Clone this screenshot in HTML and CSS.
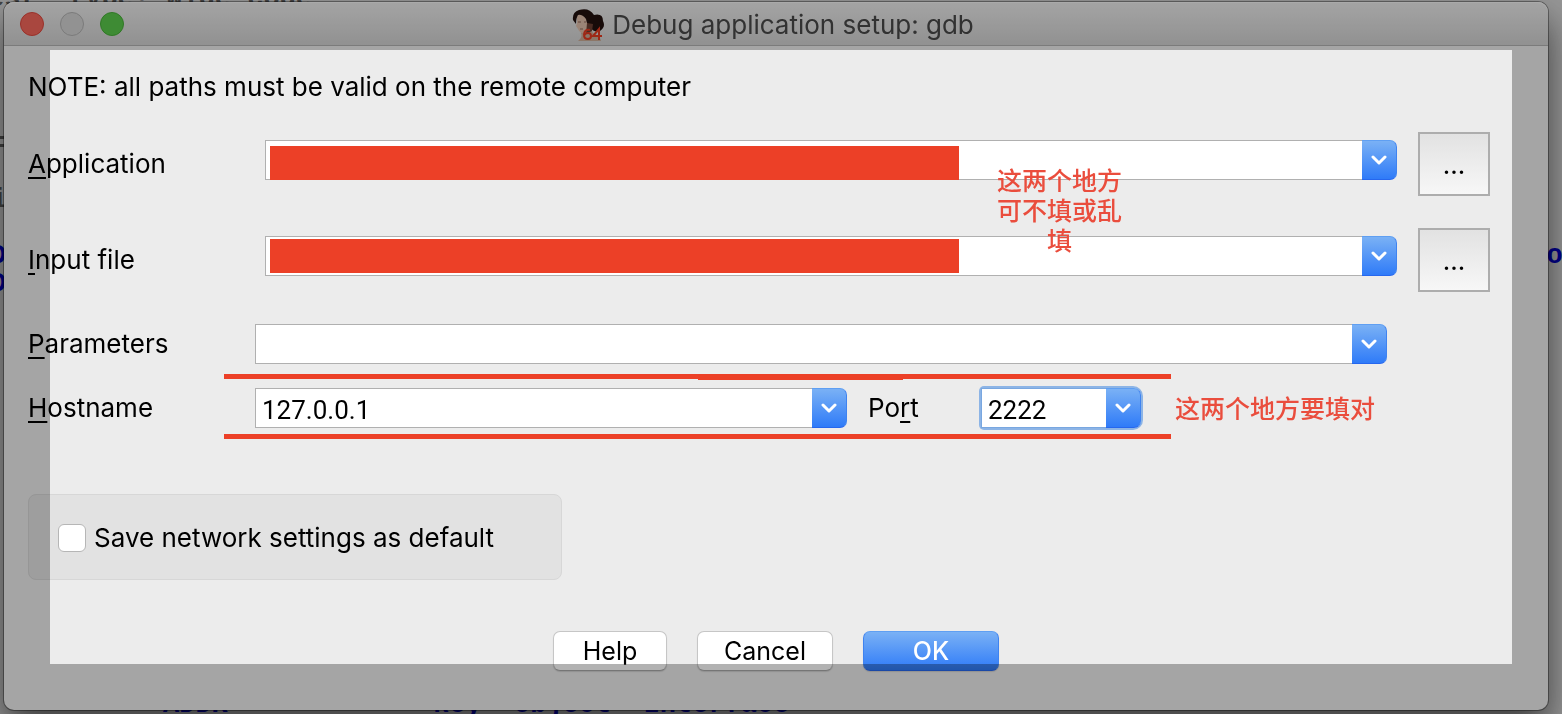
FILE: index.html
```
<!DOCTYPE html>
<html lang="en">
<head>
<meta charset="utf-8">
<title>Debug application setup: gdb</title>
<link rel="stylesheet" href="styles.css">
</head>
<body>
<div class="editor" aria-hidden="true">
  <span class="code code-top">est&nbsp; type! wide code</span>
  <span class="code code-left-a">=</span>
  <span class="code code-left-b">i</span>
  <span class="code code-left-c">D</span>
  <span class="code code-left-d">D</span>
  <span class="code code-right">or</span>
  <span class="code code-addr">ADDR</span>
  <span class="code code-key">key "object&nbsp; Interface</span>
</div>

<main class="window">
  <header class="titlebar">
    <div class="lights">
      <button class="light light-close" aria-label="Close"></button>
      <button class="light light-min" aria-label="Minimize"></button>
      <button class="light light-zoom" aria-label="Zoom"></button>
    </div>
    <h1 class="title">
      <svg class="portrait" viewBox="0 0 32 32" aria-hidden="true">
        <path d="M9 24 Q11 28 6 32 H29 Q28 27 21 24 L18 18 H10Z" fill="#c9a994"/>
        <path d="M5 7 Q8 3 13 4 L18 9 L18 20 L13 24 Q8 25 6 20 L4 17 L5 14Z" fill="#dfbeaa"/>
        <path d="M1 11 Q0 3 7 1 Q17-2 22 6 Q31 4 31 12 Q34 18 28 22 Q22 24 18 18 Q15 16 14 10 Q10 5 6 6 Q4 9 4 15Z" fill="#21100e"/>
        <path d="M15 14 L21 15 L20 22 L14 25Z" fill="#6b4033"/>
        <path d="M6 13 h3 M12 13 h2 M8 20 h3" stroke="#8f6658" stroke-width="1" fill="none"/>
        <path d="M18 21 Q12 20 12 26 Q12 30 16 30 Q19 30 19 27 Q19 24 16 24 Q13 24 12 27 M27 31 V20 L21 27 H30" stroke="#e23a20" stroke-width="2" fill="none"/>
      </svg>
      <span>Debug application setup: gdb</span>
    </h1>
  </header>

  <form class="form">
    <p class="note">NOTE: all paths must be valid on the remote computer</p>

    <div class="row row-path">
      <label class="label label-wide" for="app"><u>A</u>pplication</label>
      <div class="combo">
        <input class="field" id="app" type="text">
        <button class="drop" type="button" aria-label="Application history"><svg class="chevron" viewBox="0 0 16 10"><path d="M2 2 L8 8 L14 2"/></svg></button>
        <span class="redact redact-low"></span>
        <span class="remark remark-paths" lang="zh">这两个地方可不填或乱填</span>
      </div>
      <button class="browse" type="button" aria-label="Browse application">...</button>
    </div>

    <div class="row row-path">
      <label class="label label-wide" for="infile"><u>I</u>nput file</label>
      <div class="combo">
        <input class="field" id="infile" type="text">
        <button class="drop" type="button" aria-label="Input file history"><svg class="chevron" viewBox="0 0 16 10"><path d="M2 2 L8 8 L14 2"/></svg></button>
        <span class="redact"></span>
      </div>
      <button class="browse" type="button" aria-label="Browse input file">...</button>
    </div>

    <div class="row row-params">
      <label class="label" for="params"><u>P</u>arameters</label>
      <div class="combo">
        <input class="field" id="params" type="text">
        <button class="drop" type="button" aria-label="Parameters history"><svg class="chevron" viewBox="0 0 16 10"><path d="M2 2 L8 8 L14 2"/></svg></button>
      </div>
    </div>

    <div class="row row-host">
      <label class="label" for="host"><u>H</u>ostname</label>
      <div class="combo">
        <input class="field" id="host" type="text" value="127.0.0.1">
        <button class="drop" type="button" aria-label="Hostname history"><svg class="chevron" viewBox="0 0 16 10"><path d="M2 2 L8 8 L14 2"/></svg></button>
      </div>
      <label class="label label-port" for="port">Po<u>r</u>t</label>
      <div class="combo combo-port">
        <input class="field" id="port" type="text" value="2222">
        <button class="drop" type="button" aria-label="Port history"><svg class="chevron" viewBox="0 0 16 10"><path d="M2 2 L8 8 L14 2"/></svg></button>
      </div>
      <span class="marks"></span>
      <span class="remark remark-host" lang="zh">这两个地方要填对</span>
    </div>

    <div class="group">
      <input class="check" id="save" type="checkbox">
      <label for="save">Save network settings as default</label>
    </div>

    <div class="actions">
      <button class="btn btn-help" type="button">Help</button>
      <button class="btn" type="button">Cancel</button>
      <button class="btn btn-ok" type="submit">OK</button>
    </div>
  </form>
</main>
<div class="dim"></div>
</body>
</html>
```
FILE: styles.css
```
* { box-sizing: border-box; }

body {
  margin: 0;
  min-height: 100vh;
  display: flex;
  padding: 2px 14px 4px 4px;
  background: #ddd;
  color: #000;
  font-family: Inter, "Noto Sans CJK SC", sans-serif;
  font-size: 26px;
  line-height: 32px;
}

button, input { font: inherit; color: inherit; margin: 0; padding: 0; }

/* Code editor behind the dialog */
.editor { position: fixed; inset: 0; overflow: hidden; background: #d8d8d8; }
.code {
  position: absolute;
  font: bold 27px/28px "Liberation Mono", monospace;
  color: #0000c8;
  white-space: pre;
}
.code-top { left: -12px; top: -15px; color: #606060; }
.code-left-a { left: -9px; top: 130px; color: #606060; }
.code-left-b { left: -9px; top: 186px; color: #606060; }
.code-left-c { left: -10px; top: 242px; }
.code-left-d { left: -10px; top: 270px; }
.code-right { right: -17px; top: 242px; }
.code-addr { left: 163px; bottom: -5px; }
.code-key { left: 433px; bottom: -5px; }

.window {
  position: relative;
  flex: 1;
  display: flex;
  flex-direction: column;
  background: #ececec;
  border-radius: 10px;
  box-shadow: 0 0 0 1px rgba(0, 0, 0, .35), 0 18px 36px rgba(0, 0, 0, .6);
}

.titlebar {
  position: relative;
  display: flex;
  align-items: center;
  justify-content: center;
  height: 44px;
  padding: 2px 6px 0 0;
  border-bottom: 1px solid #b0b0b0;
  border-radius: 10px 10px 0 0;
  background: linear-gradient(#ebebeb, #d0d0d0);
  box-shadow: inset 0 1px #f4f4f4;
}
.lights { position: absolute; left: 16px; top: 10px; display: flex; gap: 16px; }
.light { width: 24px; height: 24px; border: 1px solid #dc463c; border-radius: 50%; background: #f3665b; }
.light-min { background: #d2d2d2; border-color: #b0b0b0; }
.light-zoom { background: #5ac84b; border-color: #46ad37; }
.title { display: flex; align-items: center; gap: 8px; margin: 0; font-size: 26px; font-weight: 400; color: #484848; }
.portrait { width: 32px; height: 32px; }

.form { flex: 1; padding: 25px 0 39px 24px; }
.note { margin: 0 0 29px; }

.row { position: relative; display: flex; align-items: center; }
.row-path { align-items: flex-start; padding-right: 58px; margin-bottom: 32px; }
.row-path .label { padding-top: 16px; }
.row-path .combo { margin-top: 8px; }
.row-params { padding-right: 161px; margin-bottom: 24px; }
.row-host { padding-right: 407px; margin-bottom: 66px; }

.label { flex: none; width: 227px; }
.label-wide { width: 237px; }
.label-port { width: 134px; padding-left: 21px; }
.label u { text-decoration-thickness: 2px; text-underline-offset: 4px; text-decoration-skip-ink: none; }

.combo { position: relative; flex: 1; display: flex; height: 40px; }
.field {
  flex: 1;
  min-width: 0;
  padding: 3px 6px 0;
  border: 1px solid #b0b0b0;
  border-right: 0;
  background: #fff;
  outline: 0;
  font-family: Roboto, sans-serif;
}
.drop {
  display: grid;
  place-items: center;
  width: 35px;
  border: 1px solid;
  border-color: #5f9ff2 #3f83f0 #2667ee #4d92f4;
  border-left: 0;
  border-radius: 0 7px 7px 0;
  background: linear-gradient(#7ab1f5, #2f7bf8);
}
.chevron { width: 16px; height: 10px; fill: none; stroke: #fff; stroke-width: 3; stroke-linecap: round; stroke-linejoin: round; }
.combo-port { flex: none; width: 160px; border-radius: 3px 8px 8px 3px; box-shadow: 0 0 0 2px #8cb4e6; }
.combo-port .field { border-color: #79a7e0; }

.browse {
  width: 72px;
  height: 64px;
  margin-left: 21px;
  padding-top: 2px;
  border: 2px solid #adadad;
  background: linear-gradient(#e2e2e2, #f7f7f7);
}

/* Red mark-up drawn over the dialog */
.redact { position: absolute; left: 5px; right: 438px; top: 3px; height: 34px; background: #ec4027; }
.redact-low { top: 6px; }
.remark { position: absolute; font: 500 25px/30px "Noto Sans CJK SC", sans-serif; color: #ea4d3d; text-align: center; z-index: 1; }
.remark-paths { right: 275px; top: 24px; width: 125px; }
.remark-host { right: 173px; top: 4px; }
.marks {
  position: absolute;
  left: 196px;
  right: 377px;
  top: -14px;
  height: 65px;
  border: solid #ec4027;
  border-width: 5px 0;
}
.marks::before { content: ""; position: absolute; left: 50%; top: 0; width: 205px; height: 1px; background: #ec4027; }

.group {
  display: flex;
  align-items: center;
  gap: 8px;
  width: 534px;
  height: 86px;
  padding: 2px 29px 0;
  margin-bottom: 51px;
  border: 1px solid #d7d7d7;
  border-radius: 8px;
  background: #e2e2e2;
}
.check { appearance: none; width: 28px; height: 28px; border: 1px solid #b6b6b6; border-radius: 6px; background: #fff; }

.actions { display: flex; justify-content: center; gap: 30px; padding-right: 24px; }
.btn {
  width: 136px;
  height: 40px;
  border: 1px solid #c6c6c6;
  border-bottom-color: #aaa;
  border-radius: 7px;
  background: #fff;
  box-shadow: 0 1px 1px rgba(0, 0, 0, .12);
  font-size: 25px;
}
.btn-help { width: 114px; }
.btn-ok { color: #fff; font-weight: 500; border-color: #5f9ff2 #3f83f0 #2667ee; background: linear-gradient(#7ab1f5, #2f7bf8); }

/* Shade around the captured area */
.dim { position: fixed; inset: 0; border: 50px solid rgba(0, 0, 0, .3); pointer-events: none; }
```
